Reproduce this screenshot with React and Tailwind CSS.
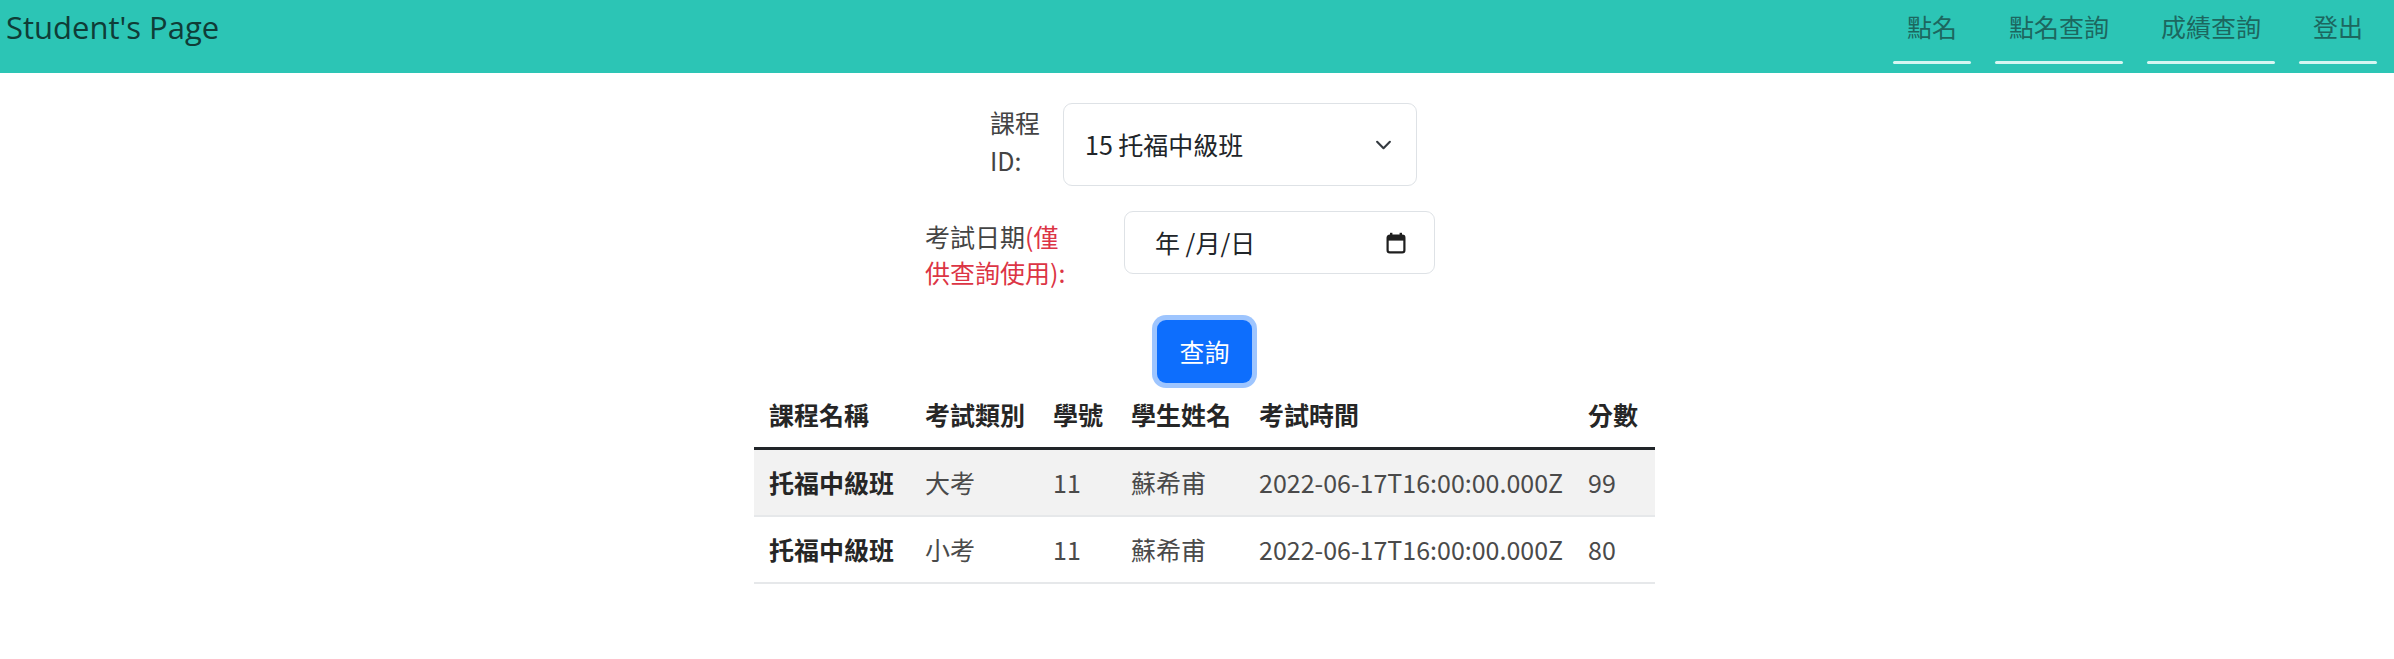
import React from 'react';

const cjk = { fontFamily: '"Noto Sans CJK TC", "Noto Sans", sans-serif' };

const rows = [
  { course: '托福中級班', type: '大考', id: '11', name: '蘇希甫', time: '2022-06-17T16:00:00.000Z', score: '99' },
  { course: '托福中級班', type: '小考', id: '11', name: '蘇希甫', time: '2022-06-17T16:00:00.000Z', score: '80' },
];

const navLinks = ['點名', '點名查詢', '成績查詢', '登出'];

const ChevronDown = () => (
  <svg width="17" height="12" viewBox="0 0 16 11" fill="none" stroke="#343a40" strokeWidth="2" strokeLinecap="round" strokeLinejoin="round">
    <path d="m2 2.5 6 6 6-6" />
  </svg>
);

const CalendarIcon = () => (
  <svg width="20" height="22" viewBox="0 0 20 22" fill="none">
    <rect x="1.6" y="3.6" width="16.8" height="16.8" rx="2.2" stroke="#1f1f1f" strokeWidth="2.2" />
    <rect x="1.6" y="3.6" width="16.8" height="5" fill="#1f1f1f" />
    <rect x="4" y="0.8" width="2.4" height="4" fill="#1f1f1f" />
    <rect x="13.6" y="0.8" width="2.4" height="4" fill="#1f1f1f" />
  </svg>
);

export default function App() {
  return (
    <div className="min-h-[659px] bg-white text-[#212529]" style={cjk}>
      {/* Navbar */}
      <nav className="flex h-[73px] items-start justify-between bg-[#2cc5b5] pl-[6px] pr-[17px]">
        <div
          className="pt-[7px] text-[31px] leading-[40px] text-[#0f3c37]"
          style={{ fontFamily: '"Open Sans", "Noto Sans", sans-serif' }}
        >
          Student's Page
        </div>
        <div className="flex gap-[24px]">
          {navLinks.map((l) => (
            <div key={l} className="flex flex-col">
              <span className="px-[14px] pt-[8px] text-[25px] leading-[37px] text-[#1c675f]">{l}</span>
              <span className="mt-[16px] h-[3px] rounded-full bg-[#d6f6f2]" />
            </div>
          ))}
        </div>
      </nav>

      {/* Content */}
      <div className="flex w-full justify-center pl-[15px]">
        <div className="flex w-[901px] flex-col">
          {/* Row 1 */}
          <div className="mt-[30px] flex items-start pl-[236px]">
            <label className="w-[73px] text-[25px] leading-[38px] text-[#444]">
              課程
              <br />
              ID:
            </label>
            <div className="flex h-[83px] w-[354px] items-center justify-between rounded-[9px] border border-[#dee2e6] pl-[21px] pr-[24px]">
              <span className="text-[25px] text-[#212529]">15 托福中級班</span>
              <ChevronDown />
            </div>
          </div>

          {/* Row 2 */}
          <div className="mt-[25px] flex items-start pl-[171px]">
            <label className="mt-[7px] w-[199px] text-[25px] leading-[36px] text-[#444]">
              考試日期<span className="text-[#dc3545]">(僅</span>
              <br />
              <span className="text-[#dc3545]">供查詢使用):</span>
            </label>
            <div className="flex h-[63px] w-[311px] items-center justify-between rounded-[9px] border border-[#dee2e6] pl-[30px] pr-[28px]">
              <span className="text-[25px] text-[#212529]">年 /月/日</span>
              <CalendarIcon />
            </div>
          </div>

          {/* Button */}
          <div className="mt-[30px] flex justify-center">
            <button className="h-[63px] w-[95px] rounded-[9px] bg-[#0d6efd] text-[25px] text-white shadow-[0_0_0_5px_rgba(13,110,253,0.4)]">
              查詢
            </button>
          </div>

          {/* Table */}
          <div className="text-[25px]">
            <div className="grid h-[67px] grid-cols-[156px_128px_78px_128px_329px_82px] items-center border-b-[3px] border-[#212529] font-bold text-[#262626]">
              <div className="pl-[15px]">課程名稱</div>
              <div className="pl-[15px]">考試類別</div>
              <div className="pl-[15px]">學號</div>
              <div className="pl-[15px]">學生姓名</div>
              <div className="pl-[15px]">考試時間</div>
              <div className="pl-[15px]">分數</div>
            </div>
            {rows.map((r, i) => (
              <div
                key={i}
                className={`grid h-[67px] grid-cols-[156px_128px_78px_128px_329px_82px] items-center border-b-[2px] border-[#e6e8ea] ${i % 2 === 0 ? 'bg-[#f2f2f2]' : 'bg-white'}`}
              >
                <div className="pl-[15px] font-bold text-[#262626]">{r.course}</div>
                <div className="pl-[15px] text-[#4a4a4a]">{r.type}</div>
                <div className="pl-[15px] text-[#4a4a4a]">{r.id}</div>
                <div className="pl-[15px] text-[#4a4a4a]">{r.name}</div>
                <div className="pl-[15px] text-[#4a4a4a]">{r.time}</div>
                <div className="pl-[15px] text-[#4a4a4a]">{r.score}</div>
              </div>
            ))}
          </div>
        </div>
      </div>
    </div>
  );
}
